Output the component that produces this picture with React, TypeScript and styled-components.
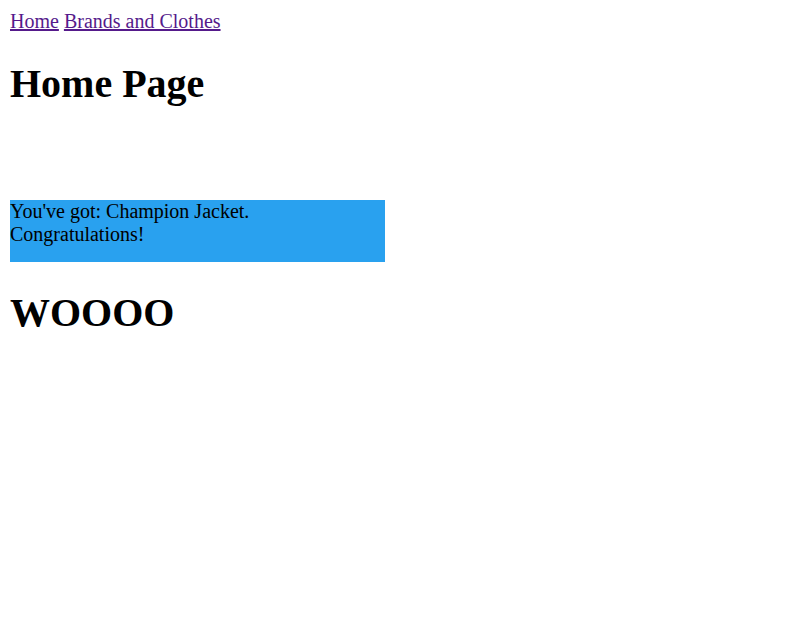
import React from "react";
import styled, { createGlobalStyle } from "styled-components";

const Global = createGlobalStyle`
  html, body { margin: 0; padding: 0; background: #fff; }
  body {
    margin: 10px;
    font-family: "Liberation Serif", "Times New Roman", serif;
    font-size: 20px;
    color: #000;
  }
`;

const Nav = styled.nav`
  display: block;
  line-height: 23px;
`;

const NavLink = styled.a`
  color: #551a8b;
  text-decoration: underline;
  cursor: pointer;
`;

const Title = styled.h1`
  font-size: 40px;
  font-weight: bold;
  margin: 28px 0 27px;
  line-height: 46px;
`;

const Prize = styled.div`
  width: 375px;
  height: 62px;
  margin-top: 93px;
  background: #29a1ef;
  line-height: 23px;
`;

export default function App() {
  return (
    <>
      <Global />
      <Nav>
        <NavLink href="#">Home</NavLink> <NavLink href="#">Brands and Clothes</NavLink>
      </Nav>
      <Title>Home Page</Title>
      <Prize>You've got: Champion Jacket. Congratulations!</Prize>
      <Title>WOOOO</Title>
    </>
  );
}
